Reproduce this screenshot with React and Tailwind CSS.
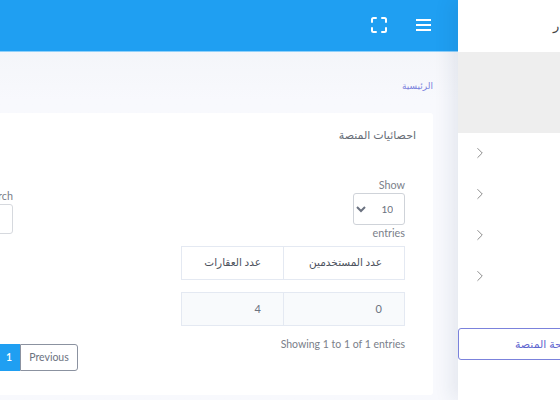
import React from "react";
import { ChevronRight } from "lucide-react";

const menuRows = ["h-[41px]", "h-[41px]", "h-[41px]", "h-[41px]"];

export default function App() {
  return (
    <div className="flex h-[400px] w-[560px] overflow-hidden bg-white font-['Lato','DejaVu_Sans',sans-serif] text-[#6b7280]">
      {/* Main */}
      <div className="flex h-full w-[458px] shrink-0 flex-col items-end overflow-hidden bg-gradient-to-b from-[#f0f2f6] to-[#f8f9fd] to-[25%]">
        {/* Top bar */}
        <header className="flex h-[52px] w-full shrink-0 items-center justify-end gap-[29px] border-b border-[#8fd0fa] bg-[#1f9ff2] pr-[27px] pb-[2px]">
          <svg width="16" height="16" viewBox="0 0 16 16" fill="none" stroke="white" strokeWidth="2" strokeLinecap="round">
            <path d="M1 5V2.500A1.500 1.500 0 0 1 2.500 1H5M11 1h2.500A1.500 1.500 0 0 1 15 2.500V5M15 11v2.500a1.500 1.500 0 0 1-1.500 1.500H11M5 15H2.500A1.500 1.500 0 0 1 1 13.500V11" />
          </svg>
          <svg width="15" height="12" viewBox="0 0 15 12" fill="none" stroke="white" strokeWidth="2">
            <path d="M0 1h15M0 6h15M0 11h15" />
          </svg>
        </header>

        {/* Breadcrumb */}
        <div className="flex h-[61px] shrink-0 items-center pt-[7px] pr-[25px]">
          <span dir="rtl" className="text-[9px] text-[#7b82dc]">الرئيسية</span>
        </div>

        {/* Card */}
        <section className="mr-[25px] h-[282px] w-[560px] shrink-0 rounded-[3px] bg-white px-[28px] pt-[12px]">
          <h2 dir="rtl" className="-mr-[11px] text-[11px] leading-[20px] font-normal text-[#666c76]">احصائيات المنصة</h2>

          <div className="mt-[32px] flex items-start justify-between">
            <div className="mt-[11px] w-[112px]">
              <label className="block text-right text-[10.800px] leading-[16px] text-[#7a808a]">Search</label>
              <input className="block h-[30px] w-full rounded-[3px] border border-[#d6d9de] bg-white" />
            </div>
            <div className="flex w-[60px] flex-col items-end text-[10.800px] text-[#7a808a]">
              <span className="leading-[16px]">Show</span>
              <select dir="rtl" className="h-[32px] w-[52px] rounded-[3px] border border-[#cfd3d9] bg-white pr-[7px] text-[10px] text-[#6b7280]">
                <option>10</option>
              </select>
              <span className="leading-[16px]">entries</span>
            </div>
          </div>

          {/* Table */}
          <div className="mt-[5px] ml-auto w-[224px]">
            <div dir="rtl" className="grid h-[34px] grid-cols-[120px_104px] border border-[#e4e9f2] text-[10.500px] text-[#4b515c]">
              <div className="flex items-center pr-[22px]">عدد المستخدمين</div>
              <div className="flex items-center border-r border-[#e4e9f2] pr-[22px]">عدد العقارات</div>
            </div>
            <div dir="rtl" className="mt-[12px] grid h-[34px] grid-cols-[120px_104px] border border-[#e4e9f2] bg-[#f8fafc] text-[11px] text-[#6b7280]">
              <div className="flex items-center pr-[22px]">0</div>
              <div className="flex items-center border-r border-[#e4e9f2] pr-[22px]">4</div>
            </div>
          </div>

          {/* Footer */}
          <div className="mt-[10px] flex items-start justify-between">
            <div className="mt-[8px] flex h-[27px] w-[177px] justify-end text-[10.500px]">
              <span className="flex w-[40px] items-center justify-end rounded-l-[3px] bg-[#1f9ff2] pr-[8px] font-semibold text-white">1</span>
              <span className="flex w-[58px] items-center justify-center rounded-r-[3px] border border-[#8b92a0] bg-white text-[#6b7280]">Previous</span>
            </div>
            <span className="text-[10.500px] leading-[16px] text-[#7a808a]">Showing 1 to 1 of 1 entries</span>
          </div>
        </section>
      </div>

      {/* Sidebar, cut by the window */}
      <aside className="z-10 h-full w-[102px] shrink-0 overflow-hidden bg-white shadow-[-8px_0_16px_rgba(30,50,90,0.08)]">
        <div className="w-[260px]">
          <div className="flex h-[52px] items-center pl-[95px]">
            <span dir="rtl" className="text-[13px] text-[#444]">عقار</span>
          </div>
          <div className="h-[81px] bg-[#eeeeee]" />
          <div className="-mt-[1px]">
            {menuRows.map((h, i) => (
              <div key={i} className={`flex ${h} items-center pl-[13px]`}>
                <ChevronRight size={18} strokeWidth={1} className="text-[#666]" />
              </div>
            ))}
          </div>
          <div dir="rtl" className="mt-[32px] flex h-[32px] w-[176px] items-center justify-center rounded-[3px] border border-[#7b82dc] text-[11px] text-[#5f67d0]">
            صفحة المنصة
          </div>
        </div>
      </aside>
    </div>
  );
}
